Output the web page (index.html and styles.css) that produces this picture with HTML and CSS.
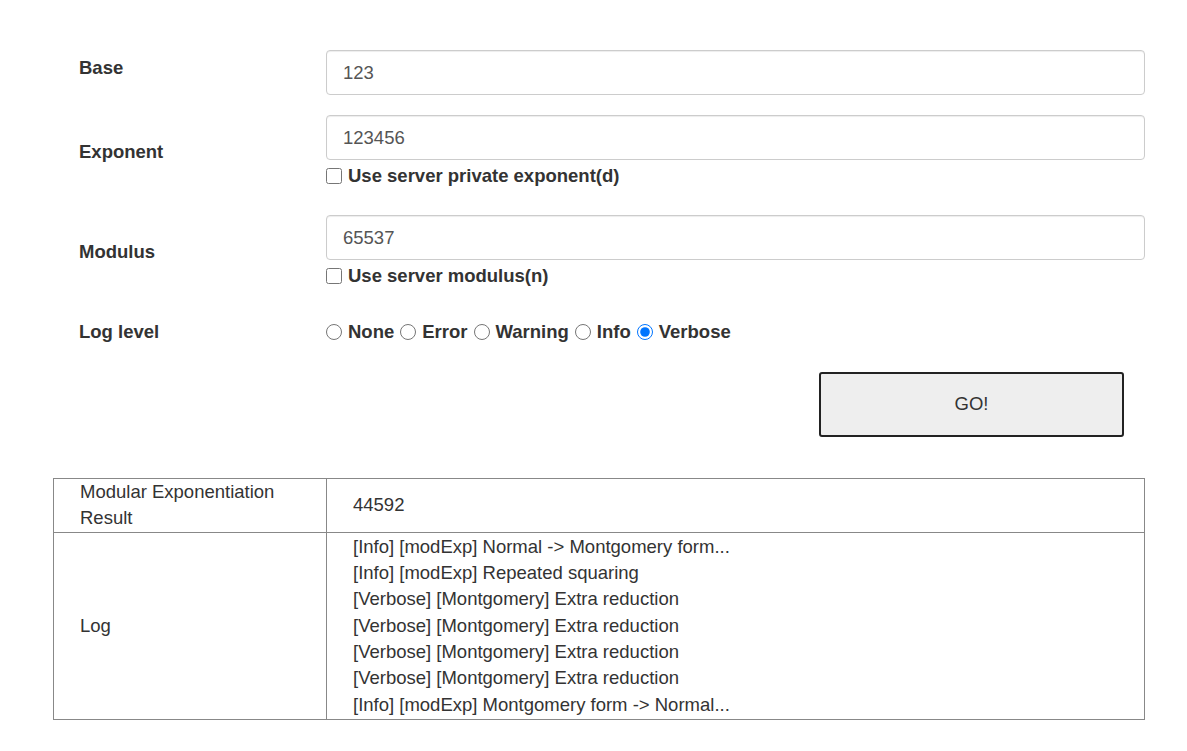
FILE: index.html
```html
<!DOCTYPE html>
<html>
<head>
<meta charset="utf-8">
<link rel="stylesheet" href="styles.css">
</head>
<body>
<div class="page">
  <div class="form">
    <div class="row row-base">
      <label class="lbl">Base</label>
      <div class="field">
        <input class="input" type="text" value="123">
      </div>
    </div>
    <div class="row row-exp">
      <label class="lbl">Exponent</label>
      <div class="field">
        <input class="input" type="text" value="123456">
        <label class="check"><input type="checkbox"><span>Use server private exponent(d)</span></label>
      </div>
    </div>
    <div class="row row-mod">
      <label class="lbl">Modulus</label>
      <div class="field">
        <input class="input" type="text" value="65537">
        <label class="check"><input type="checkbox"><span>Use server modulus(n)</span></label>
      </div>
    </div>
    <div class="row row-log">
      <label class="lbl">Log level</label>
      <div class="field radios">
        <label class="opt"><input type="radio" name="lv"><span>None</span></label>
        <label class="opt"><input type="radio" name="lv"><span>Error</span></label>
        <label class="opt"><input type="radio" name="lv"><span>Warning</span></label>
        <label class="opt"><input type="radio" name="lv"><span>Info</span></label>
        <label class="opt"><input type="radio" name="lv" checked><span>Verbose</span></label>
      </div>
    </div>
    <div class="actions">
      <button class="go" type="button">GO!</button>
    </div>
  </div>
  <table class="result">
    <tr class="r1">
      <td class="c1">Modular Exponentiation Result</td>
      <td class="c2">44592</td>
    </tr>
    <tr class="r2">
      <td class="c1">Log</td>
      <td class="c2">
        <div>[Info] [modExp] Normal -&gt; Montgomery form...</div>
        <div>[Info] [modExp] Repeated squaring</div>
        <div>[Verbose] [Montgomery] Extra reduction</div>
        <div>[Verbose] [Montgomery] Extra reduction</div>
        <div>[Verbose] [Montgomery] Extra reduction</div>
        <div>[Verbose] [Montgomery] Extra reduction</div>
        <div>[Info] [modExp] Montgomery form -&gt; Normal...</div>
      </td>
    </tr>
  </table>
</div>
</body>
</html>
```
FILE: styles.css
```css
html, body {
  margin: 0;
  padding: 0;
  background: #fff;
}
body {
  font-family: "Liberation Sans", Arial, sans-serif;
  font-size: 18.5px;
  line-height: 26.3px;
  color: #333;
}
.page {
  padding: 50px 0 0 53px;
  width: 1092px;
}
.form {
  display: flex;
  flex-direction: column;
}
.row {
  display: flex;
  align-items: center;
}
.lbl {
  width: 273px;
  box-sizing: border-box;
  padding-left: 26px;
  font-weight: bold;
  color: #333;
}
.row-base .lbl {
  align-self: flex-start;
  padding-top: 5px;
}
.field {
  flex: 1;
  display: flex;
  flex-direction: column;
}
.row-base {
  margin-bottom: 20px;
}
.row-exp {
  margin-bottom: 26px;
}
.row-mod {
  margin-bottom: 29px;
}
.input {
  box-sizing: border-box;
  height: 45px;
  width: 100%;
  margin: 0;
  border: 1px solid #ccc;
  border-radius: 4px;
  box-shadow: inset 0 1px 1px rgba(0,0,0,0.075);
  padding: 0 16px;
  font-family: "Liberation Sans", Arial, sans-serif;
  font-size: 18.5px;
  color: #555;
  background: #fff;
}
.check {
  margin-top: 3px;
  display: flex;
  align-items: center;
  gap: 6px;
  font-weight: bold;
}
.check input, .opt input {
  width: 16px;
  height: 16px;
  margin: 0;
  flex: none;
}
.radios {
  flex-direction: row;
  align-items: center;
  gap: 6px;
}
.opt {
  display: flex;
  align-items: center;
  gap: 6px;
  font-weight: bold;
}
.actions {
  display: flex;
  justify-content: flex-end;
  padding-right: 21px;
  margin-top: 27px;
}
.go {
  box-sizing: border-box;
  width: 305px;
  height: 65px;
  border: 2px solid #222;
  border-radius: 3px;
  background: #eee;
  font-family: "Liberation Sans", Arial, sans-serif;
  font-size: 18.5px;
  color: #333;
  padding: 0;
}
.result {
  margin-top: 41px;
  width: 1092px;
  border-collapse: collapse;
  border: 1px solid #888;
}
.result td {
  border: 1px solid #888;
  padding: 0 10px 0 26px;
  vertical-align: middle;
}
.result .c1 {
  width: 236px;
}
.r1 td {
  height: 53px;
}
.r2 td {
  padding-top: 1px;
  padding-bottom: 1px;
}
```
